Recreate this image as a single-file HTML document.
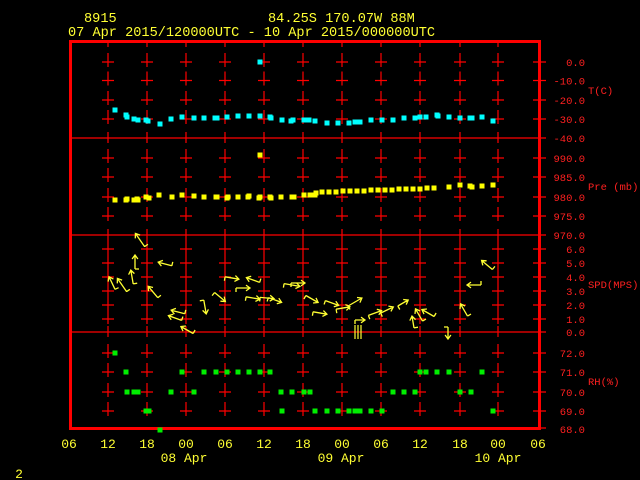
<!DOCTYPE html>
<html><head><meta charset="utf-8"><style>
html,body{margin:0;padding:0;background:#000;width:640px;height:480px;overflow:hidden}
svg{display:block}
text{font-family:"Liberation Mono",monospace}
</style></head><body>
<svg id="s" width="640" height="480" xmlns="http://www.w3.org/2000/svg">
<rect width="640" height="480" fill="#000"/>
<g fill="#ffff33" font-size="13.6">
<text x="84" y="22">8915</text>
<text x="268" y="22">84.25S  170.07W   88M</text>
<text x="68" y="36">07 Apr 2015/120000UTC - 10 Apr 2015/000000UTC</text>
</g>
<g id="grid" stroke="#ff0000" stroke-width="1.2" fill="none"></g>
<rect x="70.5" y="41.5" width="469" height="387" fill="none" stroke="#ff0000" stroke-width="3"/>
<g id="lab" fill="#ff2020" font-size="10.5" text-anchor="end"></g>
<g fill="#ff2020" font-size="10.5">
<text x="588" y="94">T(C)</text>
<text x="588" y="190">Pre (mb)</text>
<text x="588" y="288">SPD(MPS)</text>
<text x="588" y="385">RH(%)</text>
</g>
<g id="bot" fill="#ffff33" font-size="13" text-anchor="middle"></g>
<g fill="#ffff33" font-size="13" text-anchor="middle">
<text x="184" y="462">08 Apr</text>
<text x="341" y="462">09 Apr</text>
<text x="498" y="462">10 Apr</text>
<text x="19" y="478">2</text>
</g>
<g id="dat"></g>
<g id="wind" stroke="#ffff33" stroke-width="1.3" fill="none"></g>
<g stroke="#ffff33" stroke-width="1.2"><path d="M355 325V339M358 325V339M361 325V339"/></g>
</svg>
<script>
var NS="http://www.w3.org/2000/svg";
function el(p,t,a,txt){var e=document.createElementNS(NS,t);for(var k in a)e.setAttribute(k,a[k]);if(txt!=null)e.textContent=txt;document.getElementById(p).appendChild(e);return e;}
var xs=[108,147,186,225,264,303,342,381,420,460,498];
var rows=[62,80.5,100,119,158,177,197,216,249,263,277,291,305,319,353,372,392,411];
var seps=[138,235,332];
var d="";
seps.forEach(function(y){d+="M70 "+y+"H539";});
xs.forEach(function(x){
 rows.forEach(function(y){d+="M"+x+" "+(y-9)+"V"+(y+5)+"M"+(x-6)+" "+y+"H"+(x+6);});
 seps.forEach(function(y){d+="M"+x+" "+(y-6)+"V"+(y+5);});
 d+="M"+x+" 41V47";
});
rows.concat(seps).concat([428]).forEach(function(y){d+="M533 "+y+"H546";});
el("grid","path",{d:d});
var labs=[["0.0",62],["-10.0",80.5],["-20.0",100],["-30.0",119],["-40.0",138],["990.0",158],["985.0",177],["980.0",197],["975.0",216],["970.0",235],["6.0",249],["5.0",263],["4.0",277],["3.0",291],["2.0",305],["1.0",319],["0.0",332],["72.0",353],["71.0",372],["70.0",392],["69.0",411],["68.0",429]];
labs.forEach(function(l){el("lab","text",{x:585,y:l[1]+4},l[0]);});
var bx=[69,108,147,186,225,264,303,342,381,420,460,498,538],bl=["06","12","18","00","06","12","18","00","06","12","18","00","06"];
bx.forEach(function(x,i){el("bot","text",{x:x,y:448},bl[i]);});
function pts(arr,c){arr.forEach(function(p){el("dat","rect",{x:p[0]-2.5,y:p[1]-2.5,width:5,height:5,fill:c});});}
pts([[115,110],[126,115],[127,117],[134,119],[138,120],[146,120],[148,121],[160,124],[171,119],[182,117],[194,118],[204,118],[215,118],[217,118],[227,117],[238,116],[249,116],[260,116],[270,117],[271,118],[282,120],[291,121],[293,120],[304,120],[309,120],[315,121],[327,123],[338,123],[349,123],[355,122],[360,122],[371,120],[382,120],[393,120],[404,118],[415,118],[420,117],[426,117],[437,115],[438,116],[449,117],[460,118],[470,118],[472,118],[482,117],[493,121],[260,62]],"#00ffff");
var pr=[[115,200],[126,200],[127,199],[134,200],[137,199],[138,200],[146,197],[149,198],[159,195],[172,197],[182,195],[194,196],[204,197],[216,197],[217,197],[227,198],[228,197],[238,197],[249,196],[248,197],[259,198],[260,197],[270,197],[271,198],[281,197],[292,197],[294,197],[304,195],[310,195],[315,195],[316,193],[260,155]];
for(var x=322;x<=440;x+=7){pr.push([x,Math.round(192-(x-322)*4/118)]);}
pr=pr.concat([[449,187],[460,185],[470,186],[472,187],[482,186],[493,185]]);
pts(pr,"#ffff00");
var g="#00ee00";
pts([[115,353],[126,372],[182,372],[204,372],[216,372],[227,372],[238,372],[249,372],[260,372],[270,372],[420,372],[426,372],[437,372],[449,372],[482,372],
[127,392],[134,392],[138,392],[171,392],[194,392],[281,392],[292,392],[304,392],[310,392],[393,392],[404,392],[415,392],[460,392],[471,392],
[146,411],[149,411],[282,411],[315,411],[327,411],[338,411],[349,411],[355,411],[360,411],[371,411],[382,411],[493,411],[160,430]],g);
var w=[[140,240,-125,16],[135,262,-90,14],[132,277,-100,14],[112,283,-115,14],[122,285,-125,16],[165,264,-165,14],[153,292,-130,15],[175,318,-160,14],[178,312,-165,14],[187,330,-150,14],[205,307,80,14],[220,297,40,14],[232,278,10,14],[243,288,0,14],[253,280,-160,14],[253,298,10,14],[267,298,5,14],[275,300,20,14],[292,285,10,16],[298,283,0,14],[312,299,30,14],[320,313,10,14],[332,303,20,14],[343,308,-10,14],[355,302,-30,16],[360,320,0,10],[375,313,-20,14],[387,310,-25,14],[403,303,-30,12],[413,322,-100,12],[419,315,-120,14],[428,313,-150,14],[448,333,90,12],[464,310,-120,14],[474,285,-180,14],[487,265,-140,14]];
var wd="";
w.forEach(function(a){var r=a[2]*Math.PI/180,c=Math.cos(r),s=Math.sin(r),L=a[3];
 var x1=a[0]-c*L/2,y1=a[1]-s*L/2,x2=a[0]+c*L/2,y2=a[1]+s*L/2;
 var h=5,r1=r+Math.PI*0.8,r2=r-Math.PI*0.8;
 wd+="M"+x1.toFixed(1)+" "+y1.toFixed(1)+"L"+x2.toFixed(1)+" "+y2.toFixed(1)+"M"+(x2+Math.cos(r1)*h).toFixed(1)+" "+(y2+Math.sin(r1)*h).toFixed(1)+"L"+x2.toFixed(1)+" "+y2.toFixed(1)+"L"+(x2+Math.cos(r2)*h).toFixed(1)+" "+(y2+Math.sin(r2)*h).toFixed(1);
 var bx1=x1+Math.cos(r+Math.PI/2)*4,by1=y1+Math.sin(r+Math.PI/2)*4;
 wd+="M"+x1.toFixed(1)+" "+y1.toFixed(1)+"L"+bx1.toFixed(1)+" "+by1.toFixed(1);});
el("wind","path",{d:wd});
</script>
</body></html>
